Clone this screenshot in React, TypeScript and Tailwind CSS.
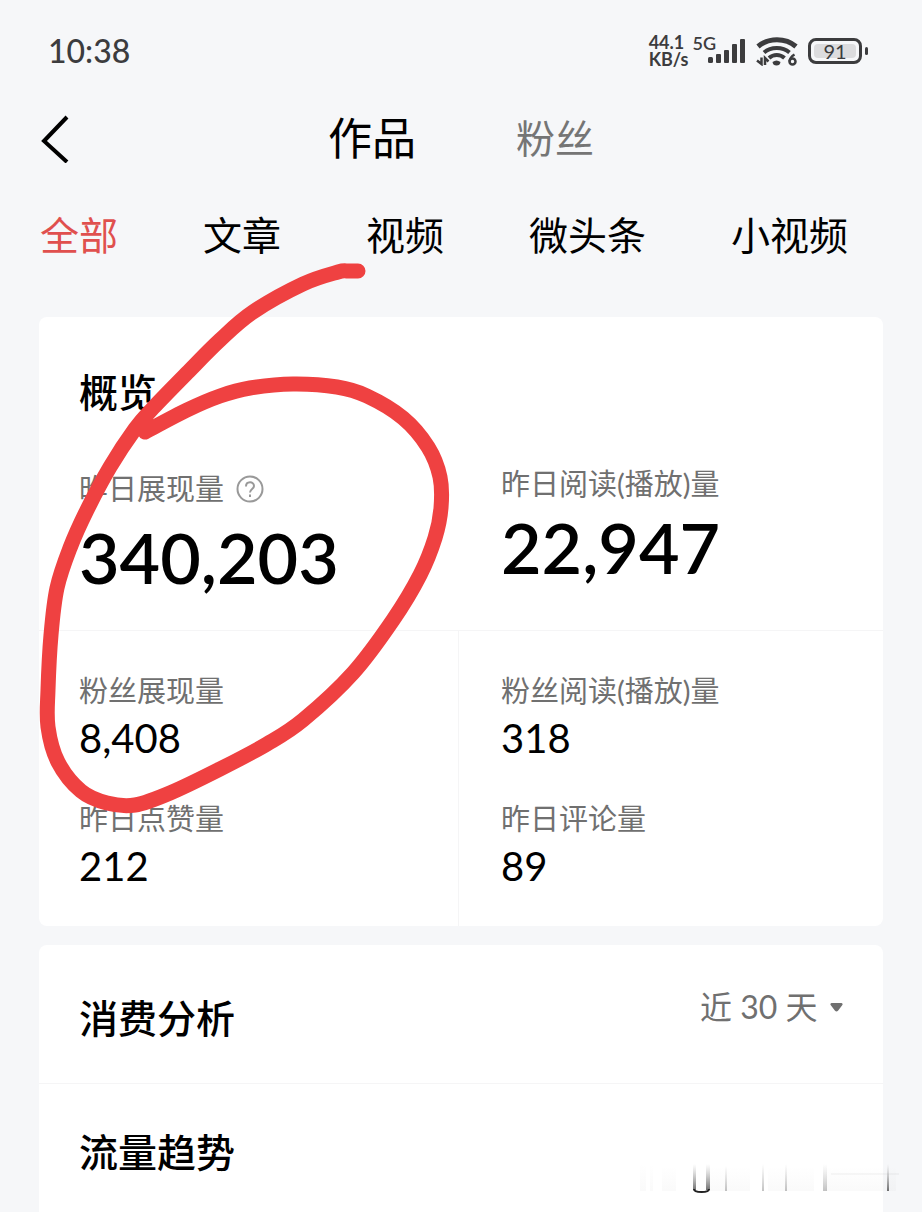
import React, { useState } from 'react';

type Point = [number, number];

const TABS = ['全部', '文章', '视频', '微头条', '小视频'];
const RANGES = ['近 30 天', '近 14 天'];

const STROKE: Point[] = [
  [358, 271], [348, 271], [338, 272], [303, 284], [253, 312], [220, 340], [187, 373], [153, 408], [135, 429],
  [110, 467], [87, 510], [70, 548], [57, 588], [51, 635], [48, 690], [48, 727], [58, 762],
  [81, 791], [107, 803], [135, 805], [170, 793], [220, 769], [267, 744], [303, 720], [353, 673],
  [393, 620], [420, 575], [435, 538], [441, 508], [440, 477], [428, 447], [403, 418], [367, 396],
  [337, 387], [293, 384], [250, 388], [220, 396], [187, 410], [145, 432],
];

// Catmull-Rom spline through every point, written as cubic curves
const smoothPath = (pts: Point[]) => {
  let d = `M${pts[0][0]} ${pts[0][1]}`;
  for (let i = 0; i < pts.length - 1; i++) {
    const p0 = pts[Math.max(0, i - 1)];
    const p1 = pts[i];
    const p2 = pts[i + 1];
    const p3 = pts[Math.min(pts.length - 1, i + 2)];
    d += ` C${p1[0] + (p2[0] - p0[0]) / 6} ${p1[1] + (p2[1] - p0[1]) / 6}`;
    d += ` ${p2[0] - (p3[0] - p1[0]) / 6} ${p2[1] - (p3[1] - p1[1]) / 6} ${p2[0]} ${p2[1]}`;
  }
  return d;
};

const SignalBars = () => (
  <svg width="38" height="24" viewBox="0 0 38 24" fill="#3c3c3e" className="-ml-2">
    <rect x="0" y="18" width="5" height="6" rx="1.5" />
    <rect x="8" y="15" width="5" height="9" rx="1" />
    <rect x="16" y="11" width="5" height="13" rx="1" />
    <rect x="24" y="5" width="5" height="19" rx="1" />
    <rect x="32" y="0" width="5" height="24" rx="1" />
  </svg>
);

const WifiIcon = () => (
  <svg width="42" height="30" viewBox="0 0 42 30" fill="none" stroke="#3c3c3e" className="ml-[10px]">
    <path d="M2 10.5C12.500 1.500 29.500 1.500 40 10.500" strokeWidth="5" />
    <path d="M8 16.500C15 10.500 26.500 10.500 33.500 16.500" strokeWidth="4" />
    <path d="M13 22C17.500 18 24 18 28.500 22" strokeWidth="4" />
    <path d="M16.500 26Q20.500 23 24.500 26Q24 29.500 20.500 29.500Q17 29.500 16.500 26Z" fill="#3c3c3e" stroke="none" />
    <path d="M5.500 21.500V28L1 24.500M9 29V22L12.500 25.500" strokeWidth="2.500" />
    <path d="M38.500 18.500Q34 21 33.500 25.500" strokeWidth="2.500" />
    <circle cx="36.500" cy="25.500" r="3" strokeWidth="2.500" />
  </svg>
);

const Battery = ({ level }: { level: number }) => (
  <div className="ml-[10px] flex items-center">
    <div className="h-[26px] w-[54px] rounded-lg border-[3px] border-[#3c3c3e] p-[3px]">
      <div className="flex h-full items-center justify-center rounded-sm bg-[#dcdcde] text-xl leading-none">{level}</div>
    </div>
    <div className="ml-[3px] h-2 w-[3px] rounded-sm bg-[#3c3c3e]" />
  </div>
);

const Stat = ({ label, value }: { label: string; value: string }) => (
  <div className="flex flex-col gap-[7px]">
    <dt className="text-[29px] leading-10 text-[#707070]">{label}</dt>
    <dd className="text-[40px] leading-10">{value}</dd>
  </div>
);

// Faded logo remains in the bottom corner
const Watermark = () => (
  <svg width="270" height="36" viewBox="0 0 270 36" fill="none" className="pointer-events-none absolute right-4 bottom-4">
    <defs>
      <linearGradient id="fade" x1="0" y1="0" x2="0" y2="1">
        <stop offset="0" stopColor="#888" stopOpacity="0" />
        <stop offset="1" stopColor="#666" stopOpacity="0.4" />
      </linearGradient>
      <linearGradient id="dark" x1="0" y1="0" x2="0" y2="1">
        <stop offset="0" stopColor="#888" stopOpacity="0" />
        <stop offset="1" stopColor="#333" stopOpacity="0.7" />
      </linearGradient>
      <linearGradient id="haze" x1="0" y1="0" x2="0" y2="1">
        <stop offset="0" stopColor="#999" stopOpacity="0" />
        <stop offset="1" stopColor="#999" stopOpacity="0.05" />
      </linearGradient>
    </defs>
    <g fill="url(#haze)">
      <rect x="4" y="4" width="6" height="27" />
      <rect x="14" y="4" width="3" height="27" />
      <rect x="26" y="6" width="14" height="25" />
      <rect x="74" y="6" width="40" height="25" />
      <rect x="132" y="6" width="46" height="25" />
      <rect x="190" y="6" width="70" height="25" />
    </g>
    <g fill="url(#dark)">
      <rect x="57" y="4" width="3" height="26" />
      <rect x="70" y="4" width="4" height="26" />
      <rect x="251" y="4" width="2" height="27" />
    </g>
    <g fill="url(#fade)">
      <rect x="89" y="6" width="2" height="25" />
      <rect x="126" y="4" width="2" height="27" />
      <rect x="149" y="4" width="2" height="27" />
      <rect x="187" y="4" width="4" height="27" />
    </g>
    <path d="M58 29C58 33 73 33 73 29" stroke="#222" strokeWidth="2" />
    <path d="M195 14H263" stroke="#999" strokeOpacity="0.15" />
  </svg>
);

export default function App() {
  const [tab, setTab] = useState('全部');
  const [range, setRange] = useState(RANGES[0]);

  return (
    <div className="relative flex min-h-screen flex-col overflow-hidden bg-[#f6f7f9] font-['Lato','Noto_Sans_CJK_SC',sans-serif] text-black">
      <div className="flex h-[102px] items-center justify-between pr-[54px] pl-12 text-[#3c3c3e]">
        <div className="text-[32px] leading-10 font-medium">10:38</div>
        <div className="flex items-center">
          <div className="text-lg leading-[17px] font-bold">
            44.1<br />KB/s
          </div>
          <div className="mb-4 ml-1 text-lg leading-[17px] font-semibold">5G</div>
          <SignalBars />
          <WifiIcon />
          <Battery level={91} />
        </div>
      </div>

      <header className="relative flex h-[72px] items-center justify-center gap-[100px]">
        <button aria-label="返回" className="absolute left-10">
          <svg width="30" height="50" viewBox="0 0 30 50" fill="none" stroke="black" strokeWidth="4">
            <path d="M27 4L4 28L27 49" />
          </svg>
        </button>
        <button className="text-[44px] leading-10">作品</button>
        <button className="text-[39px] leading-10 text-[#757575]">粉丝</button>
      </header>

      <nav className="flex gap-[85px] pt-[41px] pb-[45px] pl-10">
        {TABS.map(t => (
          <button
            key={t}
            onClick={() => setTab(t)}
            className={`text-[39px] leading-10 whitespace-nowrap ${t === tab ? 'text-[#e0504e]' : 'text-black'}`}
          >
            {t}
          </button>
        ))}
      </nav>

      <section className="mx-[39px] mt-[17px] rounded-lg bg-white pt-[55px]">
        <h2 className="pl-10 text-[39px] leading-10 font-medium">概览</h2>
        <dl className="mt-[52px] grid grid-cols-2 border-b border-[#f5f5f6] pb-[38px]">
          <div className="flex flex-col gap-2 pl-10">
            <dt className="flex h-[50px] items-center gap-3 text-[29px] text-[#707070]">
              昨日展现量
              <button aria-label="说明">
                <svg width="28" height="28" viewBox="0 0 28 28" fill="none" stroke="#999" strokeWidth="2">
                  <circle cx="14" cy="14" r="12.500" />
                  <path d="M10 11.500C10 6 18 6 18 11C18 14 14 14 14 17.500M14 19.500V22" />
                </svg>
              </button>
            </dt>
            <dd className="text-[70px] leading-[70px] font-semibold">340,203</dd>
          </div>
          <div className="flex flex-col gap-2 pl-10">
            <dt className="text-[29px] leading-10 text-[#707070]">昨日阅读(播放)量</dt>
            <dd className="text-[70px] leading-[70px] font-semibold">22,947</dd>
          </div>
        </dl>
        <dl className="grid grid-cols-2">
          <div className="mr-0.5 flex flex-col gap-[41px] border-r border-[#f5f5f6] pt-10 pb-10 pl-10">
            <Stat label="粉丝展现量" value="8,408" />
            <Stat label="昨日点赞量" value="212" />
          </div>
          <div className="flex flex-col gap-[41px] pt-10 pb-10 pl-10">
            <Stat label="粉丝阅读(播放)量" value="318" />
            <Stat label="昨日评论量" value="89" />
          </div>
        </dl>
      </section>

      <section className="mx-[39px] mt-[19px] flex-1 rounded-t-lg bg-white">
        <div className="flex items-start justify-between border-b border-[#f5f5f6] pt-[42px] pr-10 pb-[45px] pl-10">
          <h2 className="mt-[11px] text-[39px] leading-10 font-medium">消费分析</h2>
          <label className="flex items-center gap-3 text-[#707070]">
            <select
              aria-label="时间范围"
              value={range}
              onChange={e => setRange(e.target.value)}
              className="appearance-none bg-transparent text-[32px] leading-10 outline-none"
            >
              {RANGES.map(r => <option key={r}>{r}</option>)}
            </select>
            <svg width="13" height="9" viewBox="0 0 13 9" fill="#707070">
              <path d="M1.500 0H11.500Q13.500 .8 12 2.500L8 7.800Q6.500 9 5 7.800L1 2.500Q-.5 .8 1.500 0Z" />
            </svg>
          </label>
        </div>
        <h2 className="pt-12 pl-10 text-[39px] leading-10 font-medium">流量趋势</h2>
      </section>

      <svg width="480" height="840" viewBox="0 0 480 840" fill="none" className="pointer-events-none absolute top-0 left-0">
        <path d={smoothPath(STROKE)} stroke="#ef4141" strokeWidth="15" strokeLinecap="round" strokeLinejoin="round" />
      </svg>
      <Watermark />
    </div>
  );
}
